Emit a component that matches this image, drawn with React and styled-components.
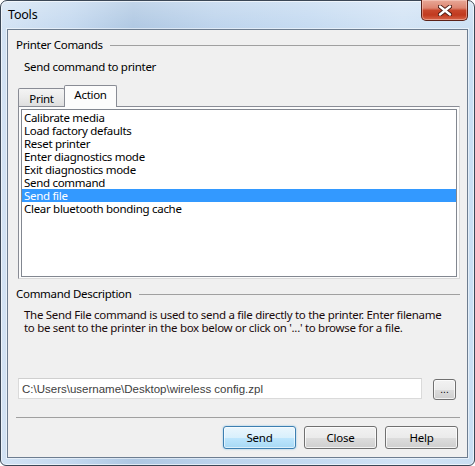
import React from "react";
import styled, { createGlobalStyle, css } from "styled-components";

const uiFont = `"Segoe UI", "Noto Sans", "Open Sans", sans-serif`;

const GlobalStyle = createGlobalStyle`
  html, body {
    margin: 0;
    padding: 0;
    background: #ffffff;
  }
  body {
    font-family: ${uiFont};
    font-size: 11.5px;
    letter-spacing: -0.3px;
    color: #000000;
  }
  * {
    box-sizing: border-box;
  }
`;

const commands = [
  "Calibrate media",
  "Load factory defaults",
  "Reset printer",
  "Enter diagnostics mode",
  "Exit diagnostics mode",
  "Send command",
  "Send file",
  "Clear bluetooth bonding cache",
];

const selectedCommand = "Send file";

const CloseGlyph = () => (
  <svg width="14" height="11" viewBox="0 0 14 11">
    <path
      d="M2 1.5 L12 9.5 M12 1.5 L2 9.5"
      stroke="#4a1a12"
      strokeWidth="4.2"
      strokeLinecap="round"
      fill="none"
    />
    <path
      d="M2 1.5 L12 9.5 M12 1.5 L2 9.5"
      stroke="#ffffff"
      strokeWidth="2.4"
      strokeLinecap="round"
      fill="none"
    />
  </svg>
);

const ToolsDialog = () => {
  return (
    <Window>
      <TitleBar>
        <Title>Tools</Title>
        <CloseButton aria-label="Close">
          <CloseGlyph />
        </CloseButton>
      </TitleBar>
      <Client>
        <GroupHeader>
          <span>Printer Comands</span>
        </GroupHeader>
        <Caption>Send command to printer</Caption>
        <TabStrip>
          <Tab>Print</Tab>
          <Tab active>Action</Tab>
        </TabStrip>
        <TabPanel>
          <ListBox>
            {commands.map((cmd) => (
              <ListItem key={cmd} selected={cmd === selectedCommand}>
                {cmd}
              </ListItem>
            ))}
          </ListBox>
        </TabPanel>
        <GroupHeader top={7}>
          <span>Command Description</span>
        </GroupHeader>
        <Description>
          <span>
            The Send File command is used to send a file directly to the
            printer. Enter filename
          </span>
          <span>
            to be sent to the printer in the box below or click on '...' to
            browse for a file.
          </span>
        </Description>
        <FileRow>
          <FileInput
            readOnly
            value="C:\Users\username\Desktop\wireless config.zpl"
          />
          <BrowseButton>...</BrowseButton>
        </FileRow>
        <Separator />
        <ButtonRow>
          <DialogButton primary>Send</DialogButton>
          <DialogButton>Close</DialogButton>
          <DialogButton>Help</DialogButton>
        </ButtonRow>
      </Client>
    </Window>
  );
};

const Window = styled.div`
  width: 475px;
  height: 466px;
  border: 1px solid #3b4756;
  border-radius: 7px 7px 6px 6px;
  padding: 0 6px 7px 6px;
  display: flex;
  flex-direction: column;
  background: linear-gradient(
      180deg,
      rgba(255, 255, 255, 0.25) 0%,
      rgba(255, 255, 255, 0) 30px
    ),
    linear-gradient(
      90deg,
      #d3e3f4 0%,
      #c3d8ef 15%,
      #aec7e2 28%,
      #bcd3ec 45%,
      #c4daf1 65%,
      #d2e3f5 85%,
      #cadff3 100%
    );
  box-shadow: inset 0 0 0 1px rgba(255, 255, 255, 0.6);
`;

const TitleBar = styled.div`
  height: 28px;
  display: flex;
  align-items: flex-start;
`;

const Title = styled.div`
  padding: 6px 0 0 1px;
  font-size: 12.5px;
  line-height: 16px;
  letter-spacing: -0.2px;
  color: #000000;
`;

const CloseButton = styled.button`
  margin-left: auto;
  margin-top: -1px;
  width: 47px;
  height: 21px;
  padding: 0;
  border: 1px solid #5b2118;
  border-top: none;
  border-radius: 0 0 5px 5px;
  display: flex;
  align-items: center;
  justify-content: center;
  background: linear-gradient(
    180deg,
    #e8a897 0%,
    #dd8571 40%,
    #c8472c 52%,
    #c13a1f 75%,
    #d8664a 100%
  );
  box-shadow: inset 0 0 0 1px rgba(255, 220, 210, 0.45);
`;

const Client = styled.div`
  height: 429px;
  border: 1px solid #6d7d90;
  box-shadow: 0 0 0 1px rgba(255, 255, 255, 0.5);
  background: #f0f0f0;
  padding: 7px 7px 0 8px;
  display: flex;
  flex-direction: column;
`;

const GroupHeader = styled.div`
  display: flex;
  align-items: center;
  gap: 7px;
  height: 15px;
  line-height: 15px;
  white-space: nowrap;
  ${({ top }) =>
    top &&
    css`
      margin-top: ${top}px;
    `}

  &::after {
    content: "";
    flex: 1;
    height: 1px;
    background: #a0a0a0;
    margin-top: 1px;
  }
`;

const Caption = styled.div`
  margin: 7px 0 0 8px;
  line-height: 15px;
  height: 15px;
`;

const TabStrip = styled.div`
  display: flex;
  align-items: flex-end;
  height: 21px;
  margin: 11px 0 0 2px;
  position: relative;
  z-index: 1;
`;

const Tab = styled.div`
  height: 18px;
  width: 47px;
  border: 1px solid #898c95;
  border-bottom: none;
  border-radius: 2px 2px 0 0;
  background: linear-gradient(180deg, #f4f4f4 0%, #ececec 45%, #dedede 100%);
  line-height: 18px;
  padding-top: 1px;
  text-align: center;

  ${({ active }) =>
    active &&
    css`
      width: 53px;
      height: 22px;
      margin-left: -1px;
      margin-bottom: -1px;
      background: #fcfcfc;
      line-height: 18px;
      padding-top: 0;
    `}
`;

const TabPanel = styled.div`
  width: 442px;
  height: 173px;
  margin-left: 2px;
  padding: 2px;
  border: 1px solid #898c95;
  border-right-color: #d9d9d9;
  border-bottom-color: #d9d9d9;
  background: #fcfcfc;
`;

const ListBox = styled.div`
  width: 436px;
  height: 168px;
  border: 1px solid #828790;
  background: #ffffff;
  padding: 1px 0 0 0;
`;

const ListItem = styled.div`
  height: 13px;
  line-height: 13px;
  padding-left: 2px;
  white-space: nowrap;
  ${({ selected }) =>
    selected &&
    css`
      background: #3399ff;
      color: #ffffff;
    `}
`;

const Description = styled.div`
  margin: 7px 0 0 8px;
  display: flex;
  flex-direction: column;
  line-height: 13px;
  white-space: nowrap;
  color: #1a0a0a;
`;

const FileRow = styled.div`
  margin: 44px 4px 0 2px;
  display: flex;
  align-items: flex-start;
  justify-content: space-between;
  height: 22px;
`;

const FileInput = styled.input`
  width: 404px;
  height: 21px;
  border: 1px solid #dadada;
  border-top-color: #cfcfcf;
  background: #ffffff;
  padding: 0 3px;
  font-family: "Liberation Sans", Arial, sans-serif;
  font-size: 11.5px;
  letter-spacing: 0;
  color: #404040;
  outline: none;
`;

const BrowseButton = styled.button`
  margin-top: 1px;
  width: 23px;
  height: 21px;
  padding: 0 0 4px 0;
  border: 1px solid #707070;
  border-radius: 3px;
  background: linear-gradient(
    180deg,
    #f2f2f2 0%,
    #ebebeb 50%,
    #dddddd 51%,
    #cfcfcf 100%
  );
  box-shadow: inset 0 0 0 1px rgba(255, 255, 255, 0.7);
  font-family: "Liberation Sans", Arial, sans-serif;
  font-size: 10px;
  line-height: 10px;
  display: flex;
  align-items: flex-end;
  justify-content: center;
  color: #000000;
`;

const Separator = styled.div`
  margin-top: 17px;
  height: 1px;
  background: #a0a0a0;
`;

const ButtonRow = styled.div`
  margin: 8px 2px 0 0;
  display: flex;
  justify-content: flex-end;
  gap: 8px;
`;

const DialogButton = styled.button`
  width: 73px;
  height: 23px;
  padding: 0;
  border: 1px solid #707070;
  border-radius: 3px;
  background: linear-gradient(
    180deg,
    #f2f2f2 0%,
    #ebebeb 50%,
    #dddddd 51%,
    #cfcfcf 100%
  );
  box-shadow: inset 0 0 0 1px rgba(255, 255, 255, 0.75);
  font-family: ${uiFont};
  font-size: 11.5px;
  letter-spacing: -0.2px;
  color: #000000;

  ${({ primary }) =>
    primary &&
    css`
      border-color: #3c7fb1;
      background: linear-gradient(
        180deg,
        #eaf6fd 0%,
        #d9f0fc 50%,
        #bee6fd 51%,
        #a7d9f5 100%
      );
      box-shadow: inset 0 0 0 1px rgba(255, 255, 255, 0.6),
        0 0 2px rgba(60, 160, 220, 0.6);
    `}
`;

export default function App() {
  return (
    <>
      <GlobalStyle />
      <ToolsDialog />
    </>
  );
}
